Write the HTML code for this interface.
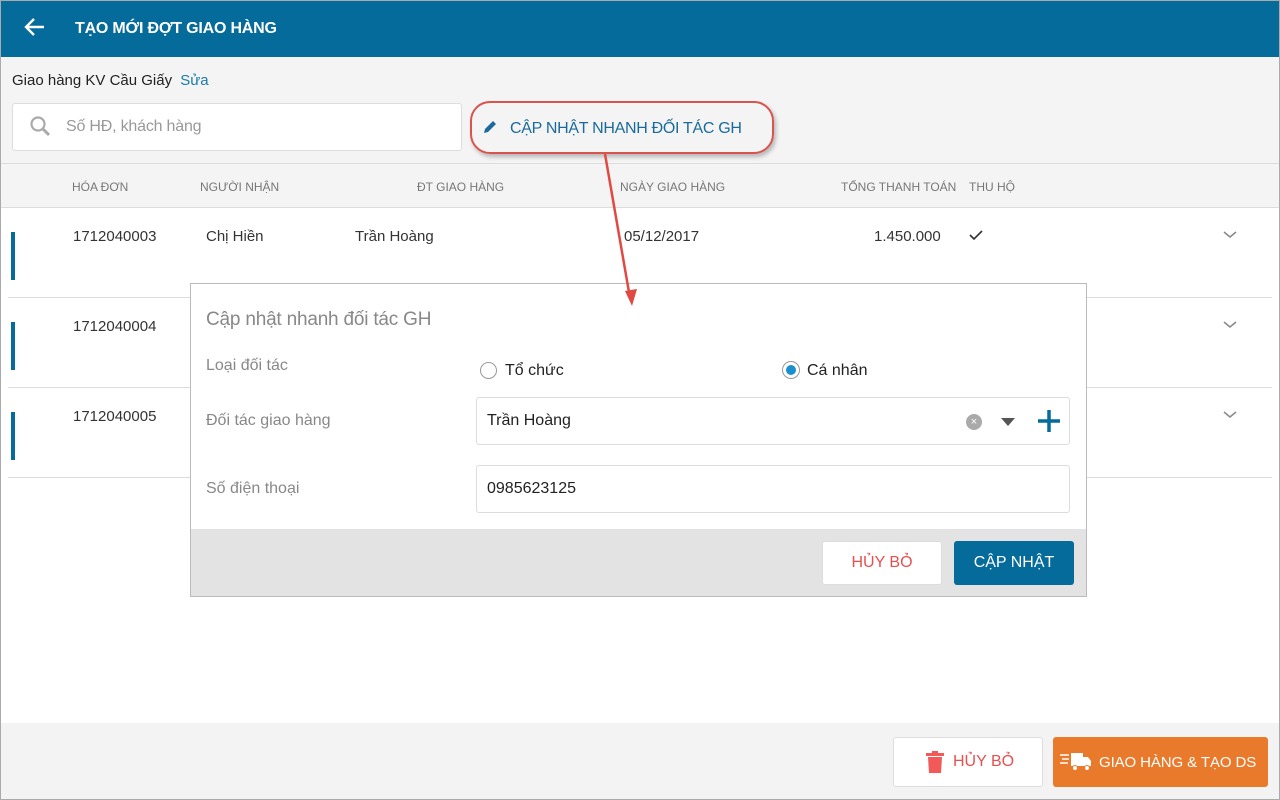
<!DOCTYPE html>
<html><head><meta charset="utf-8"><style>
*{box-sizing:border-box;margin:0;padding:0}
body{width:1280px;height:800px;overflow:hidden;font-family:"Liberation Sans",sans-serif;background:#fff;position:relative;color:#333}
.a{position:absolute}
.hdr{left:0;top:0;width:1280px;height:57px;background:#046b9b}
.t{white-space:nowrap}
.th{font-size:12px;color:#777;top:180px}
.row{font-size:15px;color:#333}
.bar{width:4px;height:48px;background:#046b9b;left:11px}
.div{left:8px;width:1264px;height:1px;background:#ddd}
.lbl{font-size:16px;color:#888;left:206px}
.inp{left:476px;width:594px;background:#fff;border:1px solid #ddd;border-radius:3px;font-size:16px;color:#222;padding-left:10px}
</style></head><body>
<div class="a" style="left:0;top:57px;width:1280px;height:150px;background:#f4f4f4"></div>
<div class="a" style="left:0;top:163px;width:1280px;height:1px;background:#ddd"></div>
<div class="a" style="left:0;top:207px;width:1280px;height:1px;background:#ddd"></div>
<div class="a hdr"></div>
<svg class="a" style="left:24px;top:17px" width="22" height="20" viewBox="0 0 22 20"><path d="M20 10H3M10 2L2 10l8 8" stroke="#fff" stroke-width="2.4" fill="none"/></svg>
<div class="a t" style="left:75px;top:20px;color:#fff;font-weight:bold;font-size:16px;letter-spacing:-0.2px">TẠO MỚI ĐỢT GIAO HÀNG</div>
<div class="a t" style="left:12px;top:72px;font-size:15px;color:#222">Giao hàng KV Cầu Giấy <span style="color:#1a7bab;margin-left:4px">Sửa</span></div>
<div class="a" style="left:12px;top:103px;width:450px;height:48px;background:#fff;border:1px solid #ddd;border-radius:3px"></div>
<svg class="a" style="left:29px;top:115px" width="24" height="24" viewBox="0 0 24 24"><circle cx="9" cy="9" r="6.5" stroke="#aaa" stroke-width="2.2" fill="none"/><path d="M14 14l6 6" stroke="#aaa" stroke-width="3"/></svg>
<div class="a t" style="left:66px;top:118px;font-size:16px;color:#999;letter-spacing:-0.2px">Số HĐ, khách hàng</div>
<div class="a" style="left:470px;top:101px;width:304px;height:53px;border:2px solid #d9534f;border-radius:20px;box-shadow:2px 3px 4px rgba(0,0,0,.25)"></div>
<svg class="a" style="left:482px;top:119px" width="16" height="16" viewBox="0 0 16 16"><path d="M2 14l1-4 8-8 3 3-8 8z" fill="#1a6b9b"/></svg>
<div class="a t" style="left:510px;top:120px;font-size:16px;color:#1a6b9b;letter-spacing:-0.3px">CẬP NHẬT NHANH ĐỐI TÁC GH</div>
<div class="a t th" style="left:72px">HÓA ĐƠN</div>
<div class="a t th" style="left:200px">NGƯỜI NHẬN</div>
<div class="a t th" style="left:417px">ĐT GIAO HÀNG</div>
<div class="a t th" style="left:620px">NGÀY GIAO HÀNG</div>
<div class="a t th" style="left:841px">TỔNG THANH TOÁN</div>
<div class="a t th" style="left:969px">THU HỘ</div>
<div class="a bar" style="top:232px"></div><div class="a bar" style="top:322px"></div><div class="a bar" style="top:412px"></div>
<div class="a div" style="top:297px"></div><div class="a div" style="top:387px"></div><div class="a div" style="top:477px"></div>
<div class="a t row" style="left:73px;top:228px">1712040003</div>
<div class="a t row" style="left:206px;top:228px">Chị Hiền</div>
<div class="a t row" style="left:355px;top:228px">Trần Hoàng</div>
<div class="a t row" style="left:624px;top:228px">05/12/2017</div>
<div class="a t row" style="left:874px;top:228px">1.450.000</div>
<svg class="a" style="left:969px;top:229px" width="14" height="12" viewBox="0 0 14 12"><path d="M1 6l4 4 8-8" stroke="#333" stroke-width="1.6" fill="none"/></svg>
<div class="a t row" style="left:73px;top:318px">1712040004</div>
<div class="a t row" style="left:73px;top:408px">1712040005</div>
<svg class="a" style="left:1223px;top:231px" width="14" height="8" viewBox="0 0 14 8"><path d="M1 1l6 5 6-5" stroke="#888" stroke-width="1.5" fill="none"/></svg>
<svg class="a" style="left:1223px;top:321px" width="14" height="8" viewBox="0 0 14 8"><path d="M1 1l6 5 6-5" stroke="#888" stroke-width="1.5" fill="none"/></svg>
<svg class="a" style="left:1223px;top:411px" width="14" height="8" viewBox="0 0 14 8"><path d="M1 1l6 5 6-5" stroke="#888" stroke-width="1.5" fill="none"/></svg>
<div class="a" style="left:190px;top:283px;width:897px;height:314px;background:#fff;border:1px solid #bbb"></div>
<div class="a" style="left:191px;top:529px;width:895px;height:67px;background:#e3e3e3"></div>
<div class="a t" style="left:206px;top:309px;font-size:19px;color:#888;letter-spacing:-0.2px">Cập nhật nhanh đối tác GH</div>
<div class="a t lbl" style="top:357px">Loại đối tác</div>
<div class="a" style="left:480px;top:362px;width:17px;height:17px;border:1px solid #999;border-radius:50%"></div>
<div class="a t" style="left:505px;top:362px;font-size:16px;color:#222">Tổ chức</div>
<div class="a" style="left:782px;top:361px;width:18px;height:18px;border:1px solid #999;border-radius:50%;background:#fff"></div>
<div class="a" style="left:786px;top:365px;width:10px;height:10px;border-radius:50%;background:#1a8fd0"></div>
<div class="a t" style="left:807px;top:362px;font-size:16px;color:#222">Cá nhân</div>
<div class="a t lbl" style="top:412px">Đối tác giao hàng</div>
<div class="a inp" style="top:397px;height:48px;line-height:46px">Trần Hoàng</div>
<div class="a" style="left:966px;top:414px;width:16px;height:16px;border-radius:50%;background:#aaa;color:#fff;font-size:11px;text-align:center;line-height:16px">×</div>
<svg class="a" style="left:1001px;top:418px" width="14" height="8"><path d="M0 0h14L7 8z" fill="#555"/></svg>
<svg class="a" style="left:1037px;top:409px" width="24" height="24"><path d="M12 1v22M1 12h22" stroke="#046b9b" stroke-width="3.5"/></svg>
<div class="a t lbl" style="top:480px">Số điện thoại</div>
<div class="a inp" style="top:465px;height:48px;line-height:46px">0985623125</div>
<div class="a" style="left:822px;top:541px;width:120px;height:44px;background:#fff;border:1px solid #ddd;border-radius:3px;color:#e85050;font-size:16px;text-align:center;line-height:42px">HỦY BỎ</div>
<div class="a" style="left:954px;top:541px;width:120px;height:44px;background:#046b9b;border-radius:3px;color:#fff;font-size:16px;text-align:center;line-height:44px">CẬP NHẬT</div>
<svg class="a" style="left:595px;top:150px" width="50" height="165"><path d="M10 4L35 148" stroke="#e04a43" stroke-width="2.5"/><path d="M30 141l7 15 5-17z" fill="#e04a43"/></svg>
<div class="a" style="left:0;top:723px;width:1280px;height:77px;background:#f3f3f3"></div>
<div class="a" style="left:893px;top:737px;width:150px;height:50px;background:#fff;border:1px solid #ddd;border-radius:3px"></div>
<svg class="a" style="left:926px;top:751px" width="18" height="22"><rect x="0" y="2" width="18" height="3" fill="#f25a5a"/><rect x="6" y="0" width="6" height="3" fill="#f25a5a"/><path d="M2 6h14l-1 16H3z" fill="#f25a5a"/></svg>
<div class="a t" style="left:953px;top:753px;font-size:16px;color:#e85050">HỦY BỎ</div>
<div class="a" style="left:1053px;top:737px;width:215px;height:50px;background:#ea7a2b;border-radius:3px"></div>
<svg class="a" style="left:1060px;top:752px" width="32" height="20"><path d="M0 3h9M2 7h7M0 11h8" stroke="#fff" stroke-width="1.5"/><rect x="11" y="1" width="12" height="13" fill="#fff"/><path d="M23 5h5l3 4v5h-8z" fill="#fff"/><circle cx="15" cy="16" r="2.5" fill="#fff" stroke="#ea7a2b"/><circle cx="27" cy="16" r="2.5" fill="#fff" stroke="#ea7a2b"/></svg>
<div class="a t" style="left:1099px;top:754px;font-size:15px;color:#fff;letter-spacing:-0.1px">GIAO HÀNG &amp; TẠO DS</div>
<div class="a" style="left:0;top:0;width:1280px;height:800px;border:1px solid #aaa;pointer-events:none"></div>
</body></html>
